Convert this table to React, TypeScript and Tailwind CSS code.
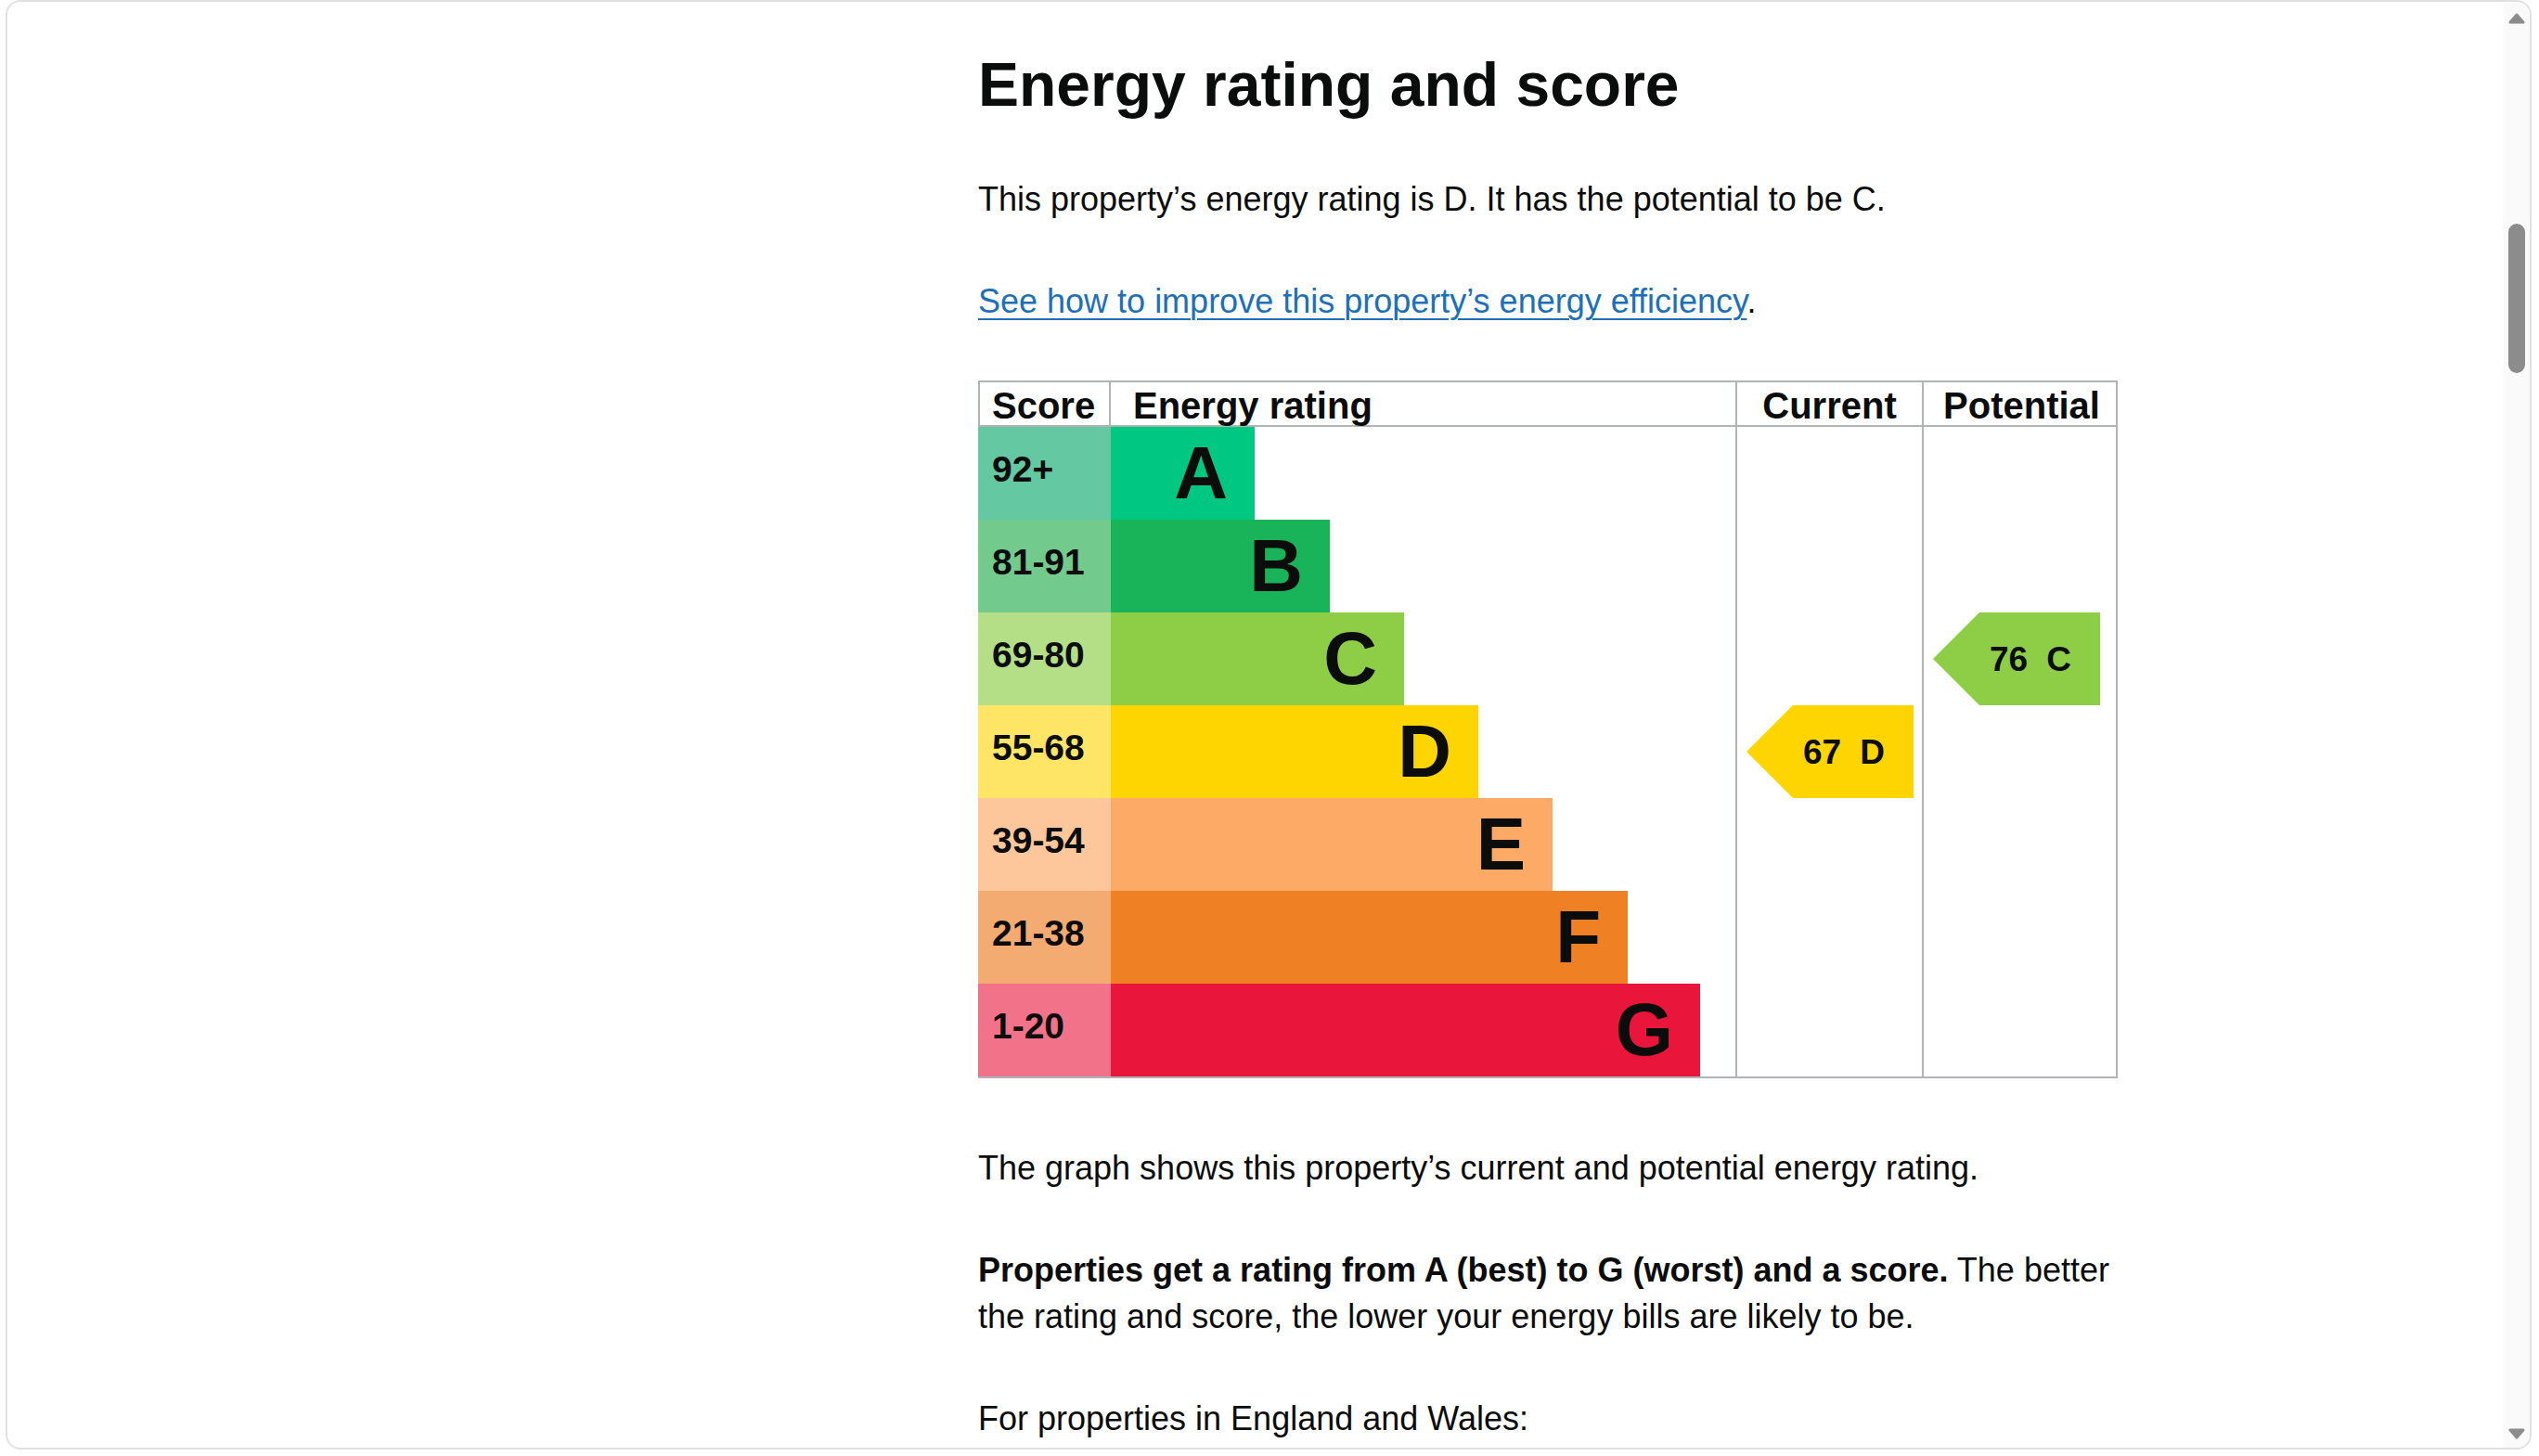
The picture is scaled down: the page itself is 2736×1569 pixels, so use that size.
const bands = [
  { score: "92+", letter: "A", light: "bg-[#64c8a2]", bar: "bg-[#00c781]", w: "w-[155px]" },
  { score: "81-91", letter: "B", light: "bg-[#72cb8d]", bar: "bg-[#19b459]", w: "w-[236px]" },
  { score: "69-80", letter: "C", light: "bg-[#b5df87]", bar: "bg-[#8dce46]", w: "w-[316px]" },
  { score: "55-68", letter: "D", light: "bg-[#ffe566]", bar: "bg-[#ffd500]", w: "w-[396px]" },
  { score: "39-54", letter: "E", light: "bg-[#fec79b]", bar: "bg-[#fcaa65]", w: "w-[476px]" },
  { score: "21-38", letter: "F", light: "bg-[#f4ab72]", bar: "bg-[#ef8023]", w: "w-[557px]" },
  { score: "1-20", letter: "G", light: "bg-[#f27389]", bar: "bg-[#e9153b]", w: "w-[635px]" },
];

const chartFont = "font-['Liberation_Sans',Arial,sans-serif] font-bold text-[#0b0c0c]";

function RatingArrow({ score, letter, color }: { score: string; letter: string; color: string }) {
  return (
    <div
      className={`ml-[10px] flex h-[100px] w-[180px] items-center pl-[61px] [clip-path:polygon(50px_0,100%_0,100%_100%,50px_100%,0_50%)] ${color}`}
    >
      <span className="flex gap-[20px] text-[37px] leading-none">
        <span>{score}</span>
        <span>{letter}</span>
      </span>
    </div>
  );
}

function EnergyChart() {
  return (
    <div className={`w-[1228px] ${chartFont}`}>
      {/* header */}
      <div className="flex h-[50px] border-2 border-[#b1b4b6] text-[40px] leading-none">
        <div className="w-[141px] border-r-2 border-[#b1b4b6] pl-[13px] pt-[5px]">Score</div>
        <div className="w-[675px] border-r-2 border-[#b1b4b6] pl-[24px] pt-[5px]">Energy rating</div>
        <div className="w-[201px] border-r-2 border-[#b1b4b6] pt-[5px] text-center">Current</div>
        <div className="flex-1 pl-[4px] pt-[5px] text-center">Potential</div>
      </div>

      {/* bands */}
      <div className="flex h-[702px] border-b-2 border-r-2 border-[#b1b4b6]">
        <div className="flex w-[818px] flex-col border-r-2 border-[#b1b4b6]">
          {bands.map((b) => (
            <div key={b.letter} className="flex h-[100px]">
              <div className={`w-[143px] pl-[15px] pt-[26px] text-[39px] leading-none ${b.light}`}>{b.score}</div>
              <div className={`pr-[29px] pt-[10px] text-right text-[80px] leading-none ${b.w} ${b.bar}`}>
                {b.letter}
              </div>
            </div>
          ))}
        </div>
        <div className="w-[201px] border-r-2 border-[#b1b4b6] pt-[300px]">
          <RatingArrow score="67" letter="D" color="bg-[#ffd500]" />
        </div>
        <div className="flex-1 pt-[200px]">
          <RatingArrow score="76" letter="C" color="bg-[#8dce46]" />
        </div>
      </div>
    </div>
  );
}

function Scrollbar() {
  return (
    <div className="flex w-[28px] flex-col items-center bg-[#fafafa]">
      <svg className="mt-[12px]" width="18" height="12" viewBox="0 0 18 12">
        <polygon points="9,2 16,10 2,10" fill="#8c8c8c" stroke="#8c8c8c" strokeWidth="3" strokeLinejoin="round" />
      </svg>
      <div className="mt-[215px] h-[161px] w-[18px] rounded-full bg-[#8c8c8c]" />
      <svg className="mb-[9px] mt-auto" width="18" height="12" viewBox="0 0 18 12">
        <polygon points="2,2 16,2 9,10" fill="#8c8c8c" stroke="#8c8c8c" strokeWidth="3" strokeLinejoin="round" />
      </svg>
    </div>
  );
}

export default function App() {
  return (
    <div className="h-[1569px] w-[2736px] overflow-hidden bg-white">
      <div className="ml-[6px] flex h-[1562px] w-[2722px] overflow-hidden rounded-[16px] border-2 border-[#e1e1e1] bg-white">
        <main className="grid flex-1 grid-cols-[1046px_1fr] overflow-hidden">
          <div />
          <div className="pt-[56px] font-['Liberation_Sans',Arial,sans-serif] text-[#0b0c0c]">
            <h2 className="mb-[66px] text-[66px] font-bold leading-none">Energy rating and score</h2>
            <p className="mb-[60px] text-[36px] leading-[50px]">
              This property’s energy rating is D. It has the potential to be C.
            </p>
            <p className="mb-[60px] text-[36px] leading-[50px]">
              <a href="#" className="text-[#1d70b8] underline decoration-2 underline-offset-[6px]">
                See how to improve this property’s energy efficiency
              </a>
              .
            </p>
            <EnergyChart />
            <div className="w-[1240px] pt-[72px] text-[36px] leading-[50px]">
              <p className="mb-[60px]">The graph shows this property’s current and potential energy rating.</p>
              <p className="mb-[60px]">
                <strong className="font-bold">Properties get a rating from A (best) to G (worst) and a score.</strong> The
                better the rating and score, the lower your energy bills are likely to be.
              </p>
              <p className="mb-[60px]">For properties in England and Wales:</p>
            </div>
          </div>
        </main>
        <Scrollbar />
      </div>
    </div>
  );
}
